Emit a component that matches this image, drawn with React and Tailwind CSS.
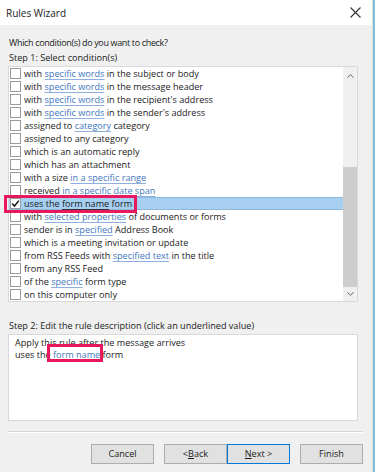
import React from "react";

const L = ({ children, dark }) => (
  <span className={dark ? "underline decoration-[#333] underline-offset-[1.5px]" : "text-[#3f77c0] underline decoration-[#8db0dc] underline-offset-[1.5px]"}>{children}</span>
);

const rows = [
  <>with <L>specific words</L> in the subject or body</>,
  <>with <L>specific words</L> in the message header</>,
  <>with <L>specific words</L> in the recipient's address</>,
  <>with <L>specific words</L> in the sender's address</>,
  <>assigned to <L>category</L> category</>,
  <>assigned to any category</>,
  <>which is an automatic reply</>,
  <>which has an attachment</>,
  <>with a size <L>in a specific range</L></>,
  <>received <L>in a specific date span</L></>,
  <>uses the <L dark>form name</L> form</>,
  <>with <L>selected properties</L> of documents or forms</>,
  <>sender is in <L>specified</L> Address Book</>,
  <>which is a meeting invitation or update</>,
  <>from RSS Feeds with <L>specified text</L> in the title</>,
  <>from any RSS Feed</>,
  <>of the <L>specific</L> form type</>,
  <>on this computer only</>,
];

const Btn = ({ children, primary }) => (
  <div
    className={`w-[63px] h-[20px] flex items-center justify-center bg-[#e1e1e1] border ${
      primary ? "border-[#0078d7]" : "border-[#adadad]"
    } text-[#1a1a1a]`}
  >
    {children}
  </div>
);

export default function App() {
  return (
    <div
      className="relative w-[375px] h-[472px] flex overflow-hidden bg-[#f0f0f0] text-[9.1px] text-[#1a1a1a] leading-none"
      style={{ fontFamily: '"Open Sans", "Noto Sans", sans-serif' }}
    >
      <div className="w-[372px] flex flex-col">
        <div className="h-[25px] bg-white flex items-center justify-between pl-[6px] pr-[8px] shrink-0">
          <span className="text-[10px]">Rules Wizard</span>
          <svg width="11" height="11" viewBox="0 0 11 11" className="mr-[3px]">
            <path d="M0.5 0.5 L10.5 10.5 M10.5 0.5 L0.5 10.5" stroke="#333" strokeWidth="1.1" />
          </svg>
        </div>
        <div className="flex-1 flex flex-col px-[8px]">
          <div className="h-[10px]" />
          <div className="h-[15px] flex items-center pl-[1px] text-[9px] tracking-[-0.35px]">Which condition(s) do you want to check?</div>
          <div className="h-[15px] flex items-center pl-[1px]">Step 1: Select condition(s)</div>
          <div className="mt-[1px] w-[350px] h-[236px] border border-[#d9d9d9] bg-white flex">
            <div className="flex-1 flex flex-col">
              {rows.map((r, i) => (
                <div
                  key={i}
                  className={`h-[13px] flex items-center shrink-0 ${
                    i === 10 ? "bg-[#a6cff1] border-y border-[#8fb7da]" : ""
                  }`}
                >
                  <div className="ml-[1px] w-[11px] h-[11px] border border-[#9a9a9a] bg-white flex items-center justify-center shrink-0">
                    {i === 10 && (
                      <svg width="9" height="9" viewBox="0 0 9 9">
                        <path d="M1.2 4.6 L3.5 7 L7.8 1.6" stroke="#111" strokeWidth="1.5" fill="none" />
                      </svg>
                    )}
                  </div>
                  <span className="ml-[3px] whitespace-nowrap">{r}</span>
                </div>
              ))}
            </div>
            <div className="w-[14px] bg-[#f0f0f0] flex flex-col items-center">
              <div className="h-[17px] flex items-center justify-center">
                <svg width="7" height="4" viewBox="0 0 7 4">
                  <path d="M0.5 3.5 L3.5 0.8 L6.5 3.5" stroke="#606060" strokeWidth="1" fill="none" />
                </svg>
              </div>
              <div className="mt-[83px] w-[14px] h-[120px] bg-[#cdcdcd]" />
              <div className="flex-1 flex items-center justify-center">
                <svg width="7" height="4" viewBox="0 0 7 4">
                  <path d="M0.5 0.5 L3.5 3.2 L6.5 0.5" stroke="#606060" strokeWidth="1" fill="none" />
                </svg>
              </div>
            </div>
          </div>
          <div className="h-[16px]" />
          <div className="h-[15px] flex items-center pl-[1px]">Step 2: Edit the rule description (click an underlined value)</div>
          <div className="mt-[1px] w-[350px] h-[87px] border border-[#d9d9d9] bg-white pl-[6px] pt-[2px] flex flex-col">
            <div className="h-[12px] flex items-center">Apply this rule after the message arrives</div>
            <div className="h-[12px] flex items-center whitespace-pre">
              uses the <L>form name</L> form
            </div>
          </div>
          <div className="mt-[10px] w-[355px] h-[2px] border-t border-[#d5d5d5] border-b border-b-white" />
          <div className="mt-[11px] w-[355px] flex justify-end">
            <Btn>Cancel</Btn>
            <div className="w-[10px]" />
            <Btn>&lt; <span className="underline">B</span>ack</Btn>
            <Btn primary><span className="underline">N</span>ext &gt;</Btn>
            <div className="w-[10px]" />
            <Btn>Finish</Btn>
          </div>
        </div>
      </div>
      <div className="w-[1px] bg-[#dcdcdc]" />
      <div className="w-[2px] bg-[#7cc0d8]" />
      <div className="absolute left-[4px] top-[195px] w-[133px] h-[18px] border-[3px] border-[#e8185c]" />
      <div className="absolute left-[47px] top-[344px] w-[56px] h-[18px] border-[3px] border-[#e8185c]" />
    </div>
  );
}
